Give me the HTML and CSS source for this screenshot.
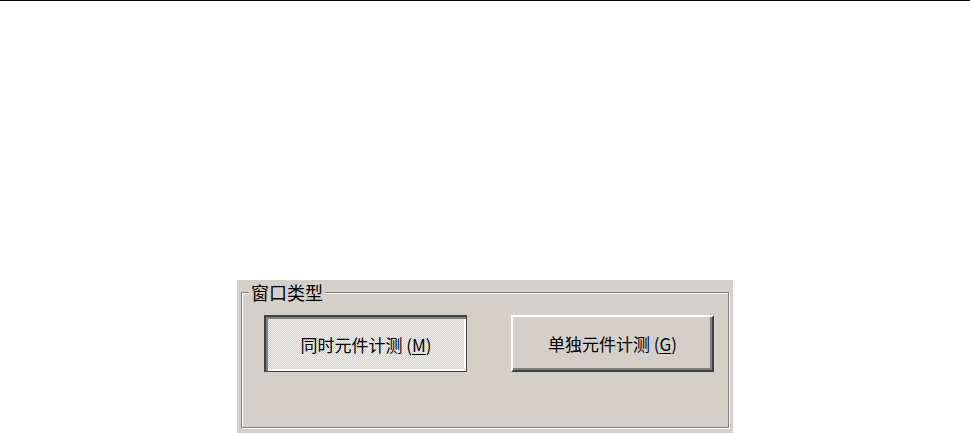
FILE: index.html
```html
<!DOCTYPE html>
<html lang="zh-CN">
<head>
    <meta charset="UTF-8">
    <meta name="viewport" content="width=device-width, initial-scale=1.0">
    <title>窗口类型</title>
    <link rel="stylesheet" href="styles.css">
</head>
<body>
    <div class="panel">
        <fieldset class="group">
            <legend>窗口类型</legend>
            <div class="buttons">
                <button class="btn btn-checked">同时元件计测 (<u>M</u>)</button>
                <button class="btn">单独元件计测 (<u>G</u>)</button>
            </div>
        </fieldset>
    </div>
</body>
</html>
```

FILE: styles.css
```css
body {
    margin: 0;
    background: #fff;
    border-top: 1px solid #000;
    font-family: "Noto Sans CJK SC", "Noto Sans", sans-serif;
    color: #000;
}
.panel {
    margin: 279px 0 0 237px;
    width: 496px;
    height: 153px;
    box-sizing: border-box;
    padding: 3px 4px 5px 4px;
    background: #D4D0C8;
}
.group {
    margin: 0;
    height: 100%;
    box-sizing: border-box;
    padding: 0;
    border: 1px solid #808080;
    box-shadow: inset 1px 1px 0 #fff, 1px 1px 0 #fff;
}
.group legend {
    margin-left: 7px;
    padding: 0 2px;
    font-size: 18px;
    line-height: 18px;
    background: #D4D0C8;
}
.buttons {
    display: flex;
    gap: 44px;
    padding: 14px 0 0 22px;
}
.btn {
    width: 203px;
    height: 57px;
    padding: 0;
    font-family: inherit;
    font-size: 17px;
    color: #000;
    background: #D4D0C8;
    border: 2px solid;
    border-color: #fff #404040 #404040 #fff;
    box-shadow: inset -2px -2px 0 #808080;
    border-radius: 0;
}
.btn u {
    text-underline-offset: 2px;
}
.btn-checked {
    border: 1px solid #404040;
    border-top-width: 2px;
    border-left-width: 2px;
    box-shadow: inset 2px 2px 0 #808080, inset -2px -2px 0 #fff;
    background: repeating-conic-gradient(#f2f1ee 0 25%, #d4d0c8 0 50%) 0 0 / 2px 2px;
}
```
